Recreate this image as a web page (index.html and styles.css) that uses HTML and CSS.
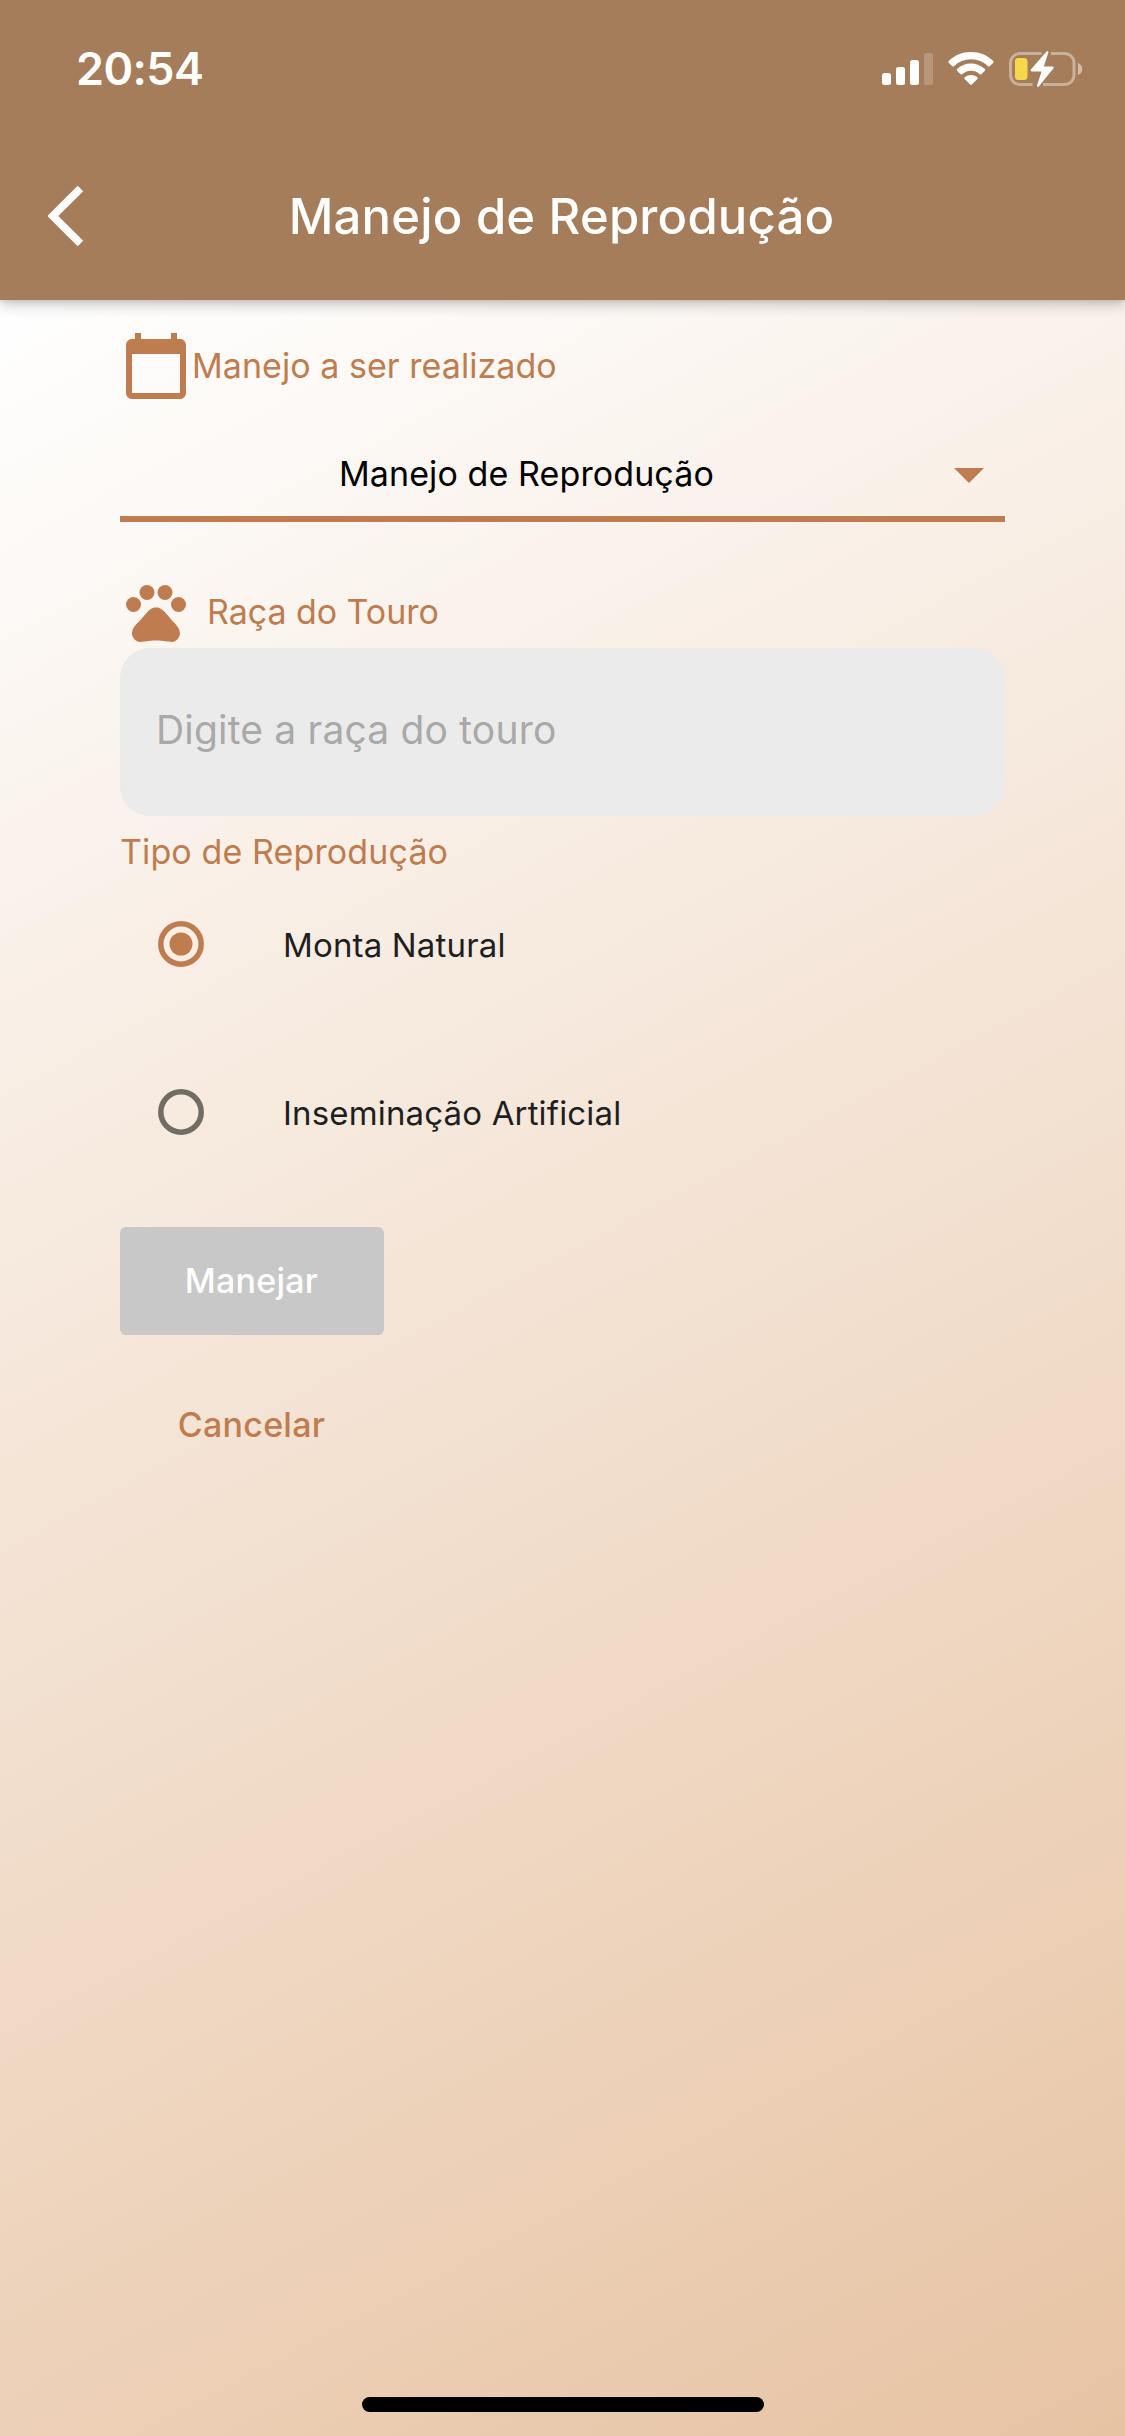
FILE: index.html
```html
<!DOCTYPE html>
<html lang="pt-BR">
<head>
<meta charset="utf-8">
<title>Manejo de Reprodução</title>
<link rel="stylesheet" href="styles.css">
</head>
<body>
<div class="screen">
  <header class="header">
    <div class="status">
      <span class="time">20:54</span>
      <svg class="status-icons" width="202" height="38" viewBox="881 50 202 38">
        <g fill="#fff">
          <rect x="882" y="73" width="9" height="12" rx="2.5"/>
          <rect x="896" y="67" width="9" height="18" rx="2.5"/>
          <rect x="910" y="60" width="9" height="25" rx="2.5"/>
          <rect x="924" y="53" width="9" height="32" rx="2.5" opacity=".2"/>
          <path d="M971 52c8.500 0 16.500 3.200 22.300 9 .5.500.5 1.200 0 1.700l-3.600 3.500c-.5.500-1.100.500-1.600 0A24.500 24.500 0 0 0 971 59.300a24.500 24.500 0 0 0-17.100 6.900c-.5.500-1.100.500-1.600 0l-3.600-3.500c-.5-.5-.5-1.200 0-1.700C954.500 55.200 962.500 52 971 52z"/>
          <path d="M971 63.500c5.200 0 10.100 2 13.900 5.500.5.500.5 1.200 0 1.700l-3.500 3.500c-.5.500-1.200.500-1.700 0a13 13 0 0 0-17.400 0c-.5.500-1.200.500-1.700 0l-3.500-3.500c-.5-.5-.5-1.200 0-1.700a20.300 20.300 0 0 1 13.900-5.500z"/>
          <path d="M971 75c2.300 0 4.500.800 6.300 2.300.5.400.5 1.100.1 1.600l-5.600 5.700c-.4.500-1.200.500-1.600 0l-5.600-5.700c-.4-.5-.4-1.200.1-1.600A9.800 9.800 0 0 1 971 75z"/>
          <path d="M1078 63c2.600 1 4.200 3.300 4.200 6s-1.600 5-4.200 6z" opacity=".5"/>
          <path d="M1046.500 51.600c.9-1 2.300-.2 1.900 1l-4.600 13.900h8.600c1.300 0 1.700 1.100.9 2.100l-14.500 17.800c-.8 1-2.200.2-1.800-1l4.500-14h-9.500c-1.300 0-1.700-1.100-.9-2.100z"/>
        </g>
        <path d="M1041.500 53.500H1020a9.500 9.500 0 0 0-9.500 9.500v12a9.500 9.500 0 0 0 9.500 9.500h12.500M1051 53.500h13.500A9.500 9.500 0 0 1 1074 63v12a9.500 9.500 0 0 1-9.500 9.500H1043" fill="none" stroke="#fff" stroke-width="3" opacity=".4"/>
        <rect x="1015" y="58" width="12.500" height="22" rx="3.500" fill="#f9d74a"/>
      </svg>
    </div>
    <div class="titlebar">
      <svg class="back" width="36" height="62" viewBox="0 0 36 62"><path d="M32.500 3.500 4.800 31l27.700 27.500" fill="none" stroke="#fff" stroke-width="7.800"/></svg>
      <h1 class="title">Manejo de Reprodução</h1>
    </div>
  </header>
  <main class="body">
    <div class="label-row">
      <svg class="icon" viewBox="0 0 24 24"><path d="M20 3h-1V1h-2v2H7V1H5v2H4c-1.100 0-2 .9-2 2v16c0 1.100.9 2 2 2h16c1.100 0 2-.9 2-2V5c0-1.100-.9-2-2-2zm0 18H4V8h16v13z"/></svg>
      <span class="label task">Manejo a ser realizado</span>
    </div>
    <div class="select">
      <span class="value">Manejo de Reprodução</span>
      <svg class="caret" width="30" height="15" viewBox="0 0 30 15"><path d="M0 0h30L15 15z"/></svg>
    </div>
    <div class="label-row breed-row">
      <svg class="icon" viewBox="0 0 24 24"><circle cx="4.500" cy="9.500" r="2.500"/><circle cx="9" cy="5.500" r="2.500"/><circle cx="15" cy="5.500" r="2.500"/><circle cx="19.500" cy="9.500" r="2.500"/><path d="M17.340 14.860c-.87-1.020-1.600-1.890-2.480-2.910-.46-.54-1.050-1.080-1.750-1.320-.11-.04-.22-.07-.33-.09-.25-.04-.52-.04-.78-.04s-.53 0-.79.050c-.11.020-.22.050-.33.090-.7.240-1.280.780-1.750 1.320-.87 1.020-1.600 1.890-2.480 2.910-1.310 1.310-2.920 2.760-2.620 4.790.29 1.020 1.020 2.030 2.330 2.320.73.150 3.060-.44 5.540-.44h.18c2.480 0 4.810.580 5.540.440 1.310-.29 2.040-1.310 2.330-2.320.31-2.040-1.300-3.490-2.610-4.800z"/></svg>
      <span class="label breed">Raça do Touro</span>
    </div>
    <div class="field"><span class="placeholder">Digite a raça do touro</span></div>
    <div class="label type">Tipo de Reprodução</div>
    <div class="option">
      <svg class="radio on" width="46" height="46" viewBox="0 0 46 46"><circle class="ring" cx="23" cy="23" r="20.200"/><circle class="dot" cx="23" cy="23" r="11.500"/></svg>
      <span class="option-text natural">Monta Natural</span>
    </div>
    <div class="option">
      <svg class="radio" width="46" height="46" viewBox="0 0 46 46"><circle class="ring" cx="23" cy="23" r="20.200"/></svg>
      <span class="option-text artificial">Inseminação Artificial</span>
    </div>
    <div class="button"><span class="submit">Manejar</span></div>
    <div class="cancel"><span class="cancel-text">Cancelar</span></div>
    <div class="home"></div>
  </main>
</div>
</body>
</html>
```
FILE: styles.css
```css
* { box-sizing: border-box; }
body { margin: 0; font-family: Inter, "Liberation Sans", sans-serif; }
.screen { width: 1125px; height: 2436px; display: flex; flex-direction: column; overflow: hidden; }

.header { height: 300px; background: #a57d5a; color: #fff; box-shadow: 0 6px 12px rgba(0,0,0,.18), 0 1px 5px rgba(0,0,0,.12); z-index: 1; }
.status { height: 132px; display: flex; justify-content: space-between; padding: 50px 42px 0 76px; }
.time { font-size: 45px; line-height: 38px; font-weight: 600; letter-spacing: -.6px; }
.titlebar { height: 168px; display: grid; grid-template-columns: 120px 1fr 120px; align-items: center; }
.back { margin: 0 0 0 48px; }
.title { margin: 0; padding: 2px 2px 0 0; font-size: 49px; line-height: 60px; font-weight: 500; letter-spacing: .2px; text-align: center; white-space: nowrap; }

.body { flex: 1; display: flex; flex-direction: column; padding: 30px 120px 24px; background: linear-gradient(152.2deg, #fff 0%, #e7c3a3 100%); }
.label-row { height: 72px; display: flex; align-items: center; }
.icon { width: 72px; height: 72px; fill: #bf7d4f; }
.label { font-size: 34px; line-height: 44px; color: #bf7d4f; white-space: nowrap; }
.task { letter-spacing: .05px; }
.select { height: 120px; border-bottom: 6px solid #bf7d4f; display: flex; justify-content: space-between; align-items: center; padding: 30px 21px 0 219px; }
.value { font-size: 34px; line-height: 44px; letter-spacing: .1px; color: #000; white-space: nowrap; }
.caret { fill: #bf7d4f; margin-top: 3px; }
.breed-row { margin-top: 54px; }
.breed { padding-left: 15px; letter-spacing: -.05px; }
.field { height: 168px; border-radius: 30px; background: #ebebeb; display: flex; align-items: center; padding: 0 36px 5px; }
.placeholder { font-size: 39px; letter-spacing: .18px; color: #a9a9a9; white-space: nowrap; }
.type { margin-top: 14px; height: 44px; letter-spacing: .12px; }
.option { height: 168px; display: flex; align-items: center; padding-left: 38px; }
.type + .option { margin-top: -14px; }
.radio .ring { fill: none; stroke: #736c64; stroke-width: 5.500px; }
.radio.on .ring { stroke: #bf7d4f; }
.radio .dot { fill: #bf7d4f; }
.option-text { padding: 2px 0 0 79px; font-size: 33px; line-height: 44px; letter-spacing: .16px; color: #1f1f1f; white-space: nowrap; }
.button { width: 264px; height: 108px; border-radius: 6px; background: #c8c8c8; color: #fff; display: flex; align-items: center; justify-content: center; margin-top: 31px; }
.submit, .cancel-text { font-size: 34px; line-height: 44px; font-weight: 500; letter-spacing: .25px; margin-right: 1px; }
.cancel { width: 264px; height: 108px; margin-top: 36px; display: flex; align-items: center; justify-content: center; color: #bf7d4f; }
.home { width: 402px; height: 15px; border-radius: 8px; background: #000; margin: auto auto 0; }
```
